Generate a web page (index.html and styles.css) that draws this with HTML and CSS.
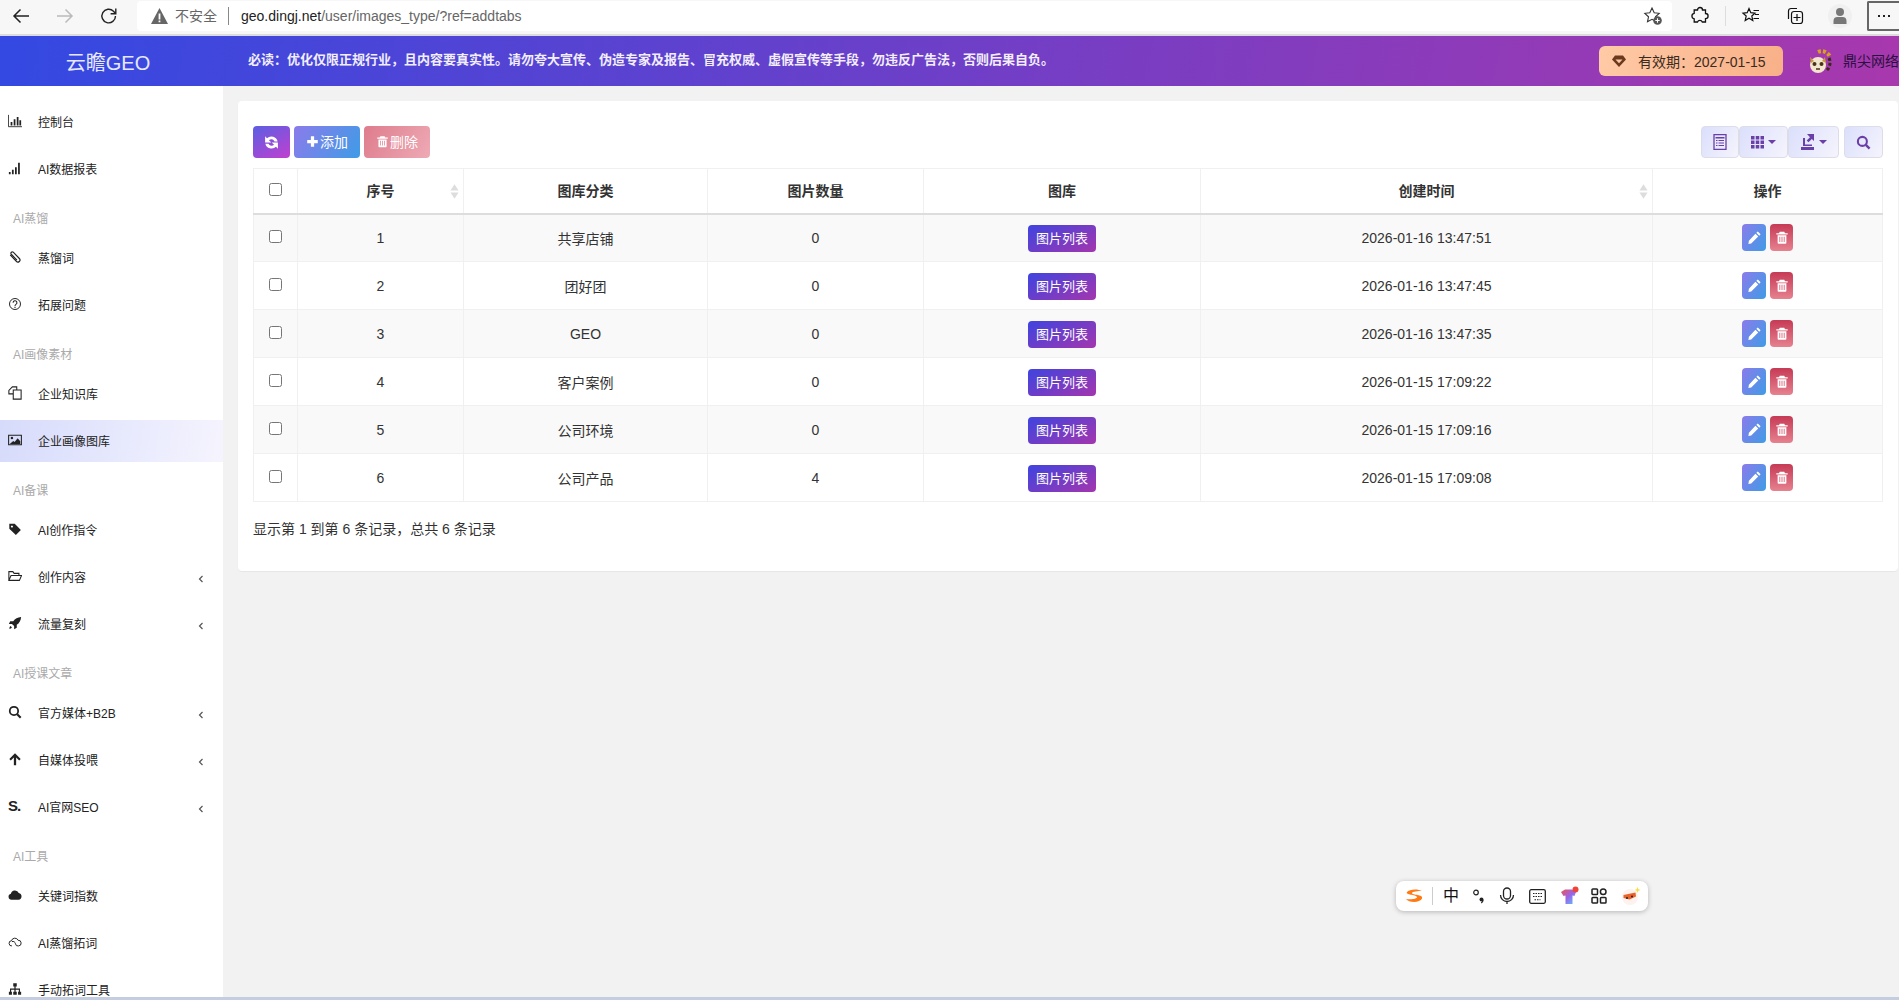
FILE: index.html
```html
<!DOCTYPE html>
<html lang="zh-CN">
<head>
  <meta charset="UTF-8">
  <title>企业画像图库</title>
  <link rel="stylesheet" href="styles.css">
</head>
<body>
  <svg class="sprite" width="0" height="0">
    <symbol id="i-refresh" viewBox="0 0 16 16"><path d="M14.500 6.800A6.800 6.800 0 0 0 3.200 3.400L1.200 1.400V8h6.600L5.300 5.500a3.700 3.700 0 0 1 5.900 1.300zM1.500 9.200a6.800 6.800 0 0 0 11.300 3.400l2 2V8H8.200l2.500 2.500a3.700 3.700 0 0 1-5.900-1.300z" fill="currentColor"/></symbol>
    <symbol id="i-plus" viewBox="0 0 16 16"><path d="M6 1.500h4V6h4.500v4H10v4.500H6V10H1.500V6H6z" fill="currentColor"/></symbol>
    <symbol id="i-trash" viewBox="0 0 16 16"><path fill-rule="evenodd" d="M5.500 1.500h5l1 1.500h3v1.500h-13V3h3zM3 5.500h10V14a1 1 0 0 1-1 1H4a1 1 0 0 1-1-1zm2 1.500v6h1V7zm2.500 0v6h1V7zm2.500 0v6h1V7z" fill="currentColor"/></symbol>
    <symbol id="i-pencil" viewBox="0 0 16 16"><path d="M11.500 1.500l3 3-1.500 1.500-3-3zM9 4l3 3-7.500 7.500L1.500 15l.5-3.500z" fill="currentColor"/></symbol>
    <symbol id="i-back" viewBox="0 0 20 20"><path d="M18 10H3M9.500 3.500L3 10l6.500 6.500" fill="none" stroke="currentColor" stroke-width="1.500"/></symbol>
    <symbol id="i-left" viewBox="0 0 6 8"><path d="M4.500 1L1.500 4l3 3" fill="none" stroke="currentColor" stroke-width="1.200"/></symbol>
    <symbol id="i-sort" viewBox="0 0 10 16"><path d="M5 0l4.500 7H.5zM5 16l4.500-7H.5z" fill="currentColor"/></symbol>
  </svg>

  <div class="browser-bar">
    <div class="nav-icons">
      <svg class="nav-icon" width="20" height="20"><use href="#i-back"/></svg>
      <svg class="nav-icon nav-off" width="20" height="20" viewBox="0 0 20 20"><use href="#i-back" transform="matrix(-1 0 0 1 20 0)"/></svg>
      <svg class="nav-icon" width="20" height="20" viewBox="0 0 20 20"><path d="M16.500 10a6.800 6.800 0 1 1-2-4.800L16.500 7.500M16.800 2.500v5.200h-5.200" fill="none" stroke="currentColor" stroke-width="1.400"/></svg>
    </div>
    <div class="address">
      <svg width="17" height="16" viewBox="0 0 17 16"><path fill-rule="evenodd" d="M8.500 0L17 16H0zM7.600 5.500v6h1.800v-6zm0 7v1.800h1.800v-1.800z" fill="#666"/></svg>
      <span class="not-safe">不安全</span>
      <span class="address-sep"></span>
      <span class="url"><b>geo.dingj.net</b>/user/images_type/?ref=addtabs</span>
      <svg class="star-add" width="20" height="20" viewBox="0 0 20 20"><path d="M9 2l2.200 4.700 5 .6-3.700 3.500 1 5L9 13.300 4.500 15.800l1-5L1.800 7.300l5-.6z" fill="none" stroke="#333" stroke-width="1.100"/><circle cx="14.500" cy="14.500" r="4.300" fill="#555"/><path d="M14.500 12.300v4.400M12.300 14.500h4.400" stroke="#fff" stroke-width="1.100"/></svg>
    </div>
    <div class="tools">
      <svg class="tool" width="20" height="20" viewBox="0 0 20 20"><path d="M7.500 4a2.500 2.500 0 0 1 5 0h3v3.500a2.600 2.600 0 0 1 0 5.200V16h-3.200a2.600 2.600 0 0 0-4.800 0H4.200v-3.200a2.800 2.800 0 0 1 0-5.500V4z" fill="none" stroke="#111" stroke-width="1.300"/></svg>
      <span class="tool-sep"></span>
      <svg class="tool" width="20" height="20" viewBox="0 0 20 20"><path d="M8 2.500l1.800 4.200 4.200.4-3.200 2.900 1 4.500L8 12.200 4.200 14.500l1-4.500L2 7.100l4.200-.4z" fill="none" stroke="#111" stroke-width="1.200"/><path d="M12.500 4.500H18M14 8.500h4M12.500 12.500H18" stroke="#111" stroke-width="1.200"/></svg>
      <svg class="tool tool-coll" width="20" height="20" viewBox="0 0 20 20"><path d="M3.500 13V5a2.500 2.500 0 0 1 2.500-2.500h6" fill="none" stroke="#111" stroke-width="1.200"/><rect x="6.500" y="5.500" width="11" height="12" rx="2.500" fill="none" stroke="#111" stroke-width="1.200"/><path d="M12 8v7M8.500 11.500h7" stroke="#111" stroke-width="1.200"/></svg>
      <span class="profile">
        <svg width="16" height="20" viewBox="0 0 16 20"><circle cx="8" cy="6" r="4" fill="#777"/><path d="M1.500 18v-3a4 4 0 0 1 4-4h5a4 4 0 0 1 4 4v3z" fill="#777"/></svg>
      </span>
      <span class="menu-box"><i></i><i></i><i></i></span>
    </div>
  </div>

  <header class="top">
    <div class="logo">云瞻GEO</div>
    <div class="notice">必读：优化仅限正规行业，且内容要真实性。请勿夸大宣传、伪造专家及报告、冒充权威、虚假宣传等手段，勿违反广告法，否则后果自负。</div>
    <div class="expire">
      <svg width="14" height="14" viewBox="0 0 14 14"><path fill-rule="evenodd" d="M3 1.500h8L14 5.500 7 13 0 5.500zM3.500 5.500L7 9.200l3.500-3.700z" fill="#6b3a1e"/></svg>
      <span>有效期：2027-01-15</span>
    </div>
    <svg class="avatar" width="26" height="28" viewBox="0 0 26 28">
      <path d="M11 5a9 9 0 0 1 12 5" fill="none" stroke="#d8a21c" stroke-width="4" stroke-dasharray="3 2"/>
      <path d="M22 11c2 4 1 9-2 12" fill="none" stroke="#3a2a10" stroke-width="3" stroke-dasharray="3 2"/>
      <circle cx="11" cy="18" r="8" fill="#f3e6cf"/>
      <path d="M3 10l4 4-3 2zM18 10l-3 4 4 2z" fill="#c99a3a"/>
      <circle cx="7.500" cy="17" r="2" fill="#4a3218"/><circle cx="14.500" cy="17" r="2" fill="#4a3218"/>
      <path d="M9 22h4" stroke="#4a3218" stroke-width="1.500"/>
    </svg>
    <div class="company">鼎尖网络</div>
  </header>

  <div class="main">
    <nav class="sidebar">
      <a class="item"><svg class="ico" viewBox="0 0 16 16"><path d="M.5 1v13.500H16" fill="none" stroke="currentColor"/><path d="M3 9h2v4H3zM6.500 6h2v7h-2zM10 3.500h2V13h-2zM13 7h2v6h-2z" fill="currentColor"/></svg>控制台</a>
      <a class="item"><svg class="ico" viewBox="0 0 16 16"><path d="M1 12.500h2V15H1zM4.500 10h2v5h-2zM8 7h2v8H8zM11.500 2h2v13h-2z" fill="currentColor"/></svg>AI数据报表</a>
      <div class="group">AI蒸馏</div>
      <a class="item"><svg class="ico" viewBox="0 0 16 16"><path d="M2.500 5.500l7 7.500a2.300 2.300 0 0 0 3.500-3.300L6 2.500A1.600 1.600 0 0 0 3.700 4.700l6.500 6.800" fill="none" stroke="currentColor" stroke-width="1.300"/></svg>蒸馏词</a>
      <a class="item"><svg class="ico" viewBox="0 0 16 16"><circle cx="8" cy="8" r="6.300" fill="none" stroke="currentColor" stroke-width="1.100"/><path d="M5.800 6.500a2.200 2.200 0 1 1 3.300 1.900c-.8.500-1.100.8-1.100 1.800M8 11v1.500" fill="none" stroke="currentColor" stroke-width="1.200"/></svg>拓展问题</a>
      <div class="group">AI画像素材</div>
      <a class="item"><svg class="ico" viewBox="0 0 16 16"><path d="M6 4.500h9V15H6zM6 9H1V5l4-4h5v3.500" fill="none" stroke="currentColor" stroke-width="1.200"/></svg>企业知识库</a>
      <a class="item active"><svg class="ico" viewBox="0 0 16 16"><path d="M.7 2.500h14.600v11H.7z" fill="none" stroke="currentColor" stroke-width="1.200"/><circle cx="4.500" cy="5.800" r="1.400" fill="currentColor"/><path d="M2 12.500l4-3.500 1.500 1.300L11 6l3 3.500v3z" fill="currentColor"/></svg>企业画像图库</a>
      <div class="group">AI备课</div>
      <a class="item"><svg class="ico" viewBox="0 0 16 16"><path fill-rule="evenodd" d="M1.500 2h6.200l7 7.200-5.700 5.600-7.500-7zM4.500 4a1.200 1.200 0 1 0 .01 0z" fill="currentColor"/></svg>AI创作指令</a>
      <a class="item"><svg class="ico" viewBox="0 0 16 16"><path d="M1 13V3h4.500l1.500 2h5.500v2.500M1 13l2.500-5.500H15.500L13 13z" fill="none" stroke="currentColor" stroke-width="1.200"/></svg>创作内容<svg class="arrow"><use href="#i-left"/></svg></a>
      <a class="item"><svg class="ico" viewBox="0 0 16 16"><path d="M15 1c-4 .3-7 2-9 5H2.500L1 9h3.500L7 11.500V15l3-1.500V10c3-2 4.700-5 5-9zM3 11.500c-1 .5-1.500 2-1.500 3 1 0 2.500-.5 3-1.500z" fill="currentColor"/></svg>流量复刻<svg class="arrow"><use href="#i-left"/></svg></a>
      <div class="group">AI授课文章</div>
      <a class="item"><svg class="ico" viewBox="0 0 16 16"><circle cx="6.800" cy="6.800" r="4.800" fill="none" stroke="currentColor" stroke-width="2"/><path d="M10.500 10.500l4 4" stroke="currentColor" stroke-width="2.400"/></svg>官方媒体+B2B<svg class="arrow"><use href="#i-left"/></svg></a>
      <a class="item"><svg class="ico" viewBox="0 0 16 16"><path d="M8 1.500L14.500 8l-1.700 1.700L9.300 6.300V15H6.700V6.300L3.200 9.700 1.500 8z" fill="currentColor"/></svg>自媒体投喂<svg class="arrow"><use href="#i-left"/></svg></a>
      <a class="item"><span class="ico ico-s">S.</span>AI官网SEO<svg class="arrow"><use href="#i-left"/></svg></a>
      <div class="group">AI工具</div>
      <a class="item"><svg class="ico" viewBox="0 0 16 16"><path d="M4 13.500a3.500 3.500 0 0 1-.7-6.900 4.700 4.700 0 0 1 9-.8 3.900 3.900 0 0 1-.3 7.700z" fill="currentColor"/></svg>关键词指数</a>
      <a class="item"><svg class="ico" viewBox="0 0 16 16"><path d="M4.500 12.500a3 3 0 0 1-.5-6 4 4 0 0 1 7.500-.5 3.200 3.200 0 0 1 .5 6.500 3 3 0 0 1-3.500-2.500A3 3 0 0 0 4.500 7.500" fill="none" stroke="currentColor" stroke-width="1.100"/></svg>AI蒸馏拓词</a>
      <a class="item"><svg class="ico" viewBox="0 0 16 16"><path d="M6 1.500h4V5H8.700v2.500h5V11H15v3.500h-3.500V11h.9V8.800H8.700V11H10v3.500H6V11h1.300V8.800H3.600V11h.9v3.500H1V11h1.300V7.500h5V5H6z" fill="currentColor"/></svg>手动拓词工具</a>
    </nav>

    <section class="content">
      <div class="card">
        <div class="toolbar">
          <button class="btn btn-refresh"><svg width="15" height="15"><use href="#i-refresh"/></svg></button>
          <button class="btn btn-add"><svg width="13" height="13"><use href="#i-plus"/></svg>添加</button>
          <button class="btn btn-del"><svg width="13" height="13"><use href="#i-trash"/></svg>删除</button>
          <div class="toolbar-right">
            <div class="btn-group">
              <button class="tbtn tbtn-list"><svg width="14" height="16" viewBox="0 0 14 16"><path d="M1 .7h12v14.600H1z" fill="none" stroke="currentColor" stroke-width="1.300"/><path d="M2.500 3h9v1.500h-9zM3 6h1.500v1H3zM5.500 6H11v1H5.500zM3 8.500h1.500v1H3zM5.500 8.500H11v1H5.500zM3 11h1.500v1H3zM5.500 11H11v1H5.500z" fill="currentColor"/></svg></button>
              <button class="tbtn tbtn-cols"><svg width="13" height="14" viewBox="0 0 13 14"><path d="M0 1h3.500v3.500H0zM4.750 1h3.500v3.500h-3.500zM9.500 1H13v3.500H9.500zM0 5.500h3.500V9H0zM4.750 5.500h3.500V9h-3.500zM9.500 5.500H13V9H9.500zM0 10h3.500v3.500H0zM4.750 10h3.500v3.500h-3.500zM9.500 10H13v3.500H9.500z" fill="currentColor"/></svg><span class="caret"></span></button>
              <button class="tbtn tbtn-export"><svg width="14" height="16" viewBox="0 0 14 16"><path d="M6 0h7v7l-2.200-2L7.500 8.300 5.700 6.500 9 3.200zM2 4h2v6.500h7V12H2zM0 13h13v3H0z" fill="currentColor"/></svg><span class="caret"></span></button>
            </div>
            <button class="tbtn tbtn-search"><svg width="15" height="15" viewBox="0 0 16 16"><circle cx="6.800" cy="6.800" r="4.800" fill="none" stroke="currentColor" stroke-width="2.200"/><path d="M10.500 10.500l4 4" stroke="currentColor" stroke-width="2.600"/></svg></button>
          </div>
        </div>

        <table class="grid">
          <colgroup>
            <col class="c-check"><col class="c-no"><col class="c-type"><col class="c-count"><col class="c-lib"><col class="c-time"><col>
          </colgroup>
          <thead>
            <tr>
              <th><input type="checkbox"></th>
              <th class="sortable"><span class="th-text">序号</span><svg class="sort"><use href="#i-sort"/></svg></th>
              <th><span class="th-text">图库分类</span></th>
              <th><span class="th-text">图片数量</span></th>
              <th><span class="th-text">图库</span></th>
              <th class="sortable"><span class="th-text">创建时间</span><svg class="sort"><use href="#i-sort"/></svg></th>
              <th><span class="th-text">操作</span></th>
            </tr>
          </thead>
          <tbody>
            <tr>
              <td><input type="checkbox"></td><td>1</td><td>共享店铺</td><td>0</td>
              <td><a class="list-btn">图片列表</a></td><td>2026-01-16 13:47:51</td>
              <td class="ops"><a class="op op-edit"><svg width="15" height="15"><use href="#i-pencil"/></svg></a><a class="op op-del"><svg width="14" height="15"><use href="#i-trash"/></svg></a></td>
            </tr>
            <tr>
              <td><input type="checkbox"></td><td>2</td><td>团好团</td><td>0</td>
              <td><a class="list-btn">图片列表</a></td><td>2026-01-16 13:47:45</td>
              <td class="ops"><a class="op op-edit"><svg width="15" height="15"><use href="#i-pencil"/></svg></a><a class="op op-del"><svg width="14" height="15"><use href="#i-trash"/></svg></a></td>
            </tr>
            <tr>
              <td><input type="checkbox"></td><td>3</td><td>GEO</td><td>0</td>
              <td><a class="list-btn">图片列表</a></td><td>2026-01-16 13:47:35</td>
              <td class="ops"><a class="op op-edit"><svg width="15" height="15"><use href="#i-pencil"/></svg></a><a class="op op-del"><svg width="14" height="15"><use href="#i-trash"/></svg></a></td>
            </tr>
            <tr>
              <td><input type="checkbox"></td><td>4</td><td>客户案例</td><td>0</td>
              <td><a class="list-btn">图片列表</a></td><td>2026-01-15 17:09:22</td>
              <td class="ops"><a class="op op-edit"><svg width="15" height="15"><use href="#i-pencil"/></svg></a><a class="op op-del"><svg width="14" height="15"><use href="#i-trash"/></svg></a></td>
            </tr>
            <tr>
              <td><input type="checkbox"></td><td>5</td><td>公司环境</td><td>0</td>
              <td><a class="list-btn">图片列表</a></td><td>2026-01-15 17:09:16</td>
              <td class="ops"><a class="op op-edit"><svg width="15" height="15"><use href="#i-pencil"/></svg></a><a class="op op-del"><svg width="14" height="15"><use href="#i-trash"/></svg></a></td>
            </tr>
            <tr>
              <td><input type="checkbox"></td><td>6</td><td>公司产品</td><td>4</td>
              <td><a class="list-btn">图片列表</a></td><td>2026-01-15 17:09:08</td>
              <td class="ops"><a class="op op-edit"><svg width="15" height="15"><use href="#i-pencil"/></svg></a><a class="op op-del"><svg width="14" height="15"><use href="#i-trash"/></svg></a></td>
            </tr>
          </tbody>
        </table>

        <div class="pager">显示第 1 到第 6 条记录，总共 6 条记录</div>
      </div>
    </section>
  </div>

  <div class="taskbar-edge"></div>

  <!-- input method bar floating over the page -->
  <div class="ime">
    <svg width="20" height="16" viewBox="0 0 20 16"><path d="M18 3C14 .5 5 1 3 4c-2 3 9 2.500 10 5 .5 1.500-5 3-11 2 3 4 14 4 16-.5C19.500 6 8 7.500 8 5c0-1.500 6-2 10-2z" fill="#ff7a12"/></svg>
    <span class="ime-sep"></span>
    <span class="ime-zh">中</span>
    <svg width="12" height="16" viewBox="0 0 12 16"><circle cx="3" cy="4.500" r="2.300" fill="none" stroke="#222" stroke-width="1.200"/><circle cx="8.500" cy="11.500" r="2" fill="#222"/><path d="M10 12c0 1.500-.6 2.500-1.800 3" stroke="#222" stroke-width="1.200" fill="none"/></svg>
    <svg width="16" height="18" viewBox="0 0 16 18"><rect x="4.500" y="1" width="7" height="11" rx="3.500" fill="none" stroke="#222" stroke-width="1.300"/><path d="M1.500 8a6.500 6.500 0 0 0 13 0M8 14.500V17" fill="none" stroke="#222" stroke-width="1.300"/></svg>
    <svg width="17" height="15" viewBox="0 0 17 15"><rect x=".7" y=".7" width="15.600" height="13.600" rx="1.500" fill="none" stroke="#222" stroke-width="1.300"/><path d="M4 4.500h9M4 7.500h9M5.500 10.800h6" stroke="#222" stroke-width="1.100" stroke-dasharray="1.500 1"/></svg>
    <svg class="ime-shirt" width="20" height="20" viewBox="0 0 20 20"><defs><linearGradient id="shirt" x1="0" y1="0" x2="1" y2="1"><stop offset="0" stop-color="#f0524a"/><stop offset=".5" stop-color="#9b63e8"/><stop offset="1" stop-color="#58c8ff"/></linearGradient></defs><path d="M1 6l4-2.500h7L16 6l-1.500 4-2-.5V18h-7V9.500l-2 .5z" fill="url(#shirt)"/><circle cx="15.500" cy="3.500" r="3" fill="#f0443a"/></svg>
    <svg width="16" height="16" viewBox="0 0 16 16"><g fill="none" stroke="#222" stroke-width="1.500"><rect x="1" y="1" width="5.500" height="5.500" rx=".8"/><circle cx="12.200" cy="3.800" r="2.800"/><rect x="1" y="9.500" width="5.500" height="5.500" rx=".8"/><rect x="9.500" y="9.500" width="5.500" height="5.500" rx=".8"/></g></svg>
    <svg width="20" height="20" viewBox="0 0 20 20"><circle cx="9" cy="11" r="8" fill="#fdf2ee"/><path d="M2.500 9l12-2.500.5 4-6.500 3-6-1.500z" fill="#e8622a"/><circle cx="6" cy="12" r="1" fill="#222"/><circle cx="11" cy="10.500" r="1" fill="#222"/><path d="M16.500 1l.8 2.200 2.200.8-2.200.8-.8 2.200-.8-2.200-2.200-.8 2.200-.8z" fill="#ffd93b"/></svg>
  </div>
</body>
</html>
```

FILE: styles.css
```css
* {
  box-sizing: border-box;
}

html, body {
  height: 100%;
}

body {
  margin: 0;
  display: flex;
  flex-direction: column;
  overflow: hidden;
  font-family: "Liberation Sans", "Noto Sans CJK SC", sans-serif;
  font-size: 14px;
  color: #333;
  background-color: #f2f2f2;
}

.sprite {
  position: absolute;
}

/* browser chrome */
.browser-bar {
  flex: none;
  display: flex;
  align-items: flex-start;
  height: 36px;
  padding-top: 1px;
  background-color: #f7f7f7;
  border-bottom: 2px solid #dcdcdc;
}

.nav-icons {
  flex: none;
  display: flex;
  align-items: center;
  gap: 24px;
  width: 137px;
  height: 30px;
  padding-left: 11px;
}

.nav-icon {
  color: #222;
}

.nav-off {
  color: #bbb;
}

.address {
  flex: none;
  display: flex;
  align-items: center;
  width: 1535px;
  height: 30px;
  padding: 0 9px 0 14px;
  background-color: #fff;
  border-radius: 4px;
}

.not-safe {
  margin-left: 7px;
  padding-bottom: 2px;
  color: #666;
}

.address-sep {
  width: 1px;
  height: 18px;
  margin: 0 12px 0 11px;
  background-color: #888;
}

.url {
  color: #666;
}

.url b {
  font-weight: normal;
  color: #222;
}

.star-add {
  margin-left: auto;
}

.tools {
  flex: 1;
  display: flex;
  align-items: center;
  height: 30px;
  padding-left: 18px;
}

.tool-sep {
  width: 1px;
  height: 20px;
  margin: 0 15px;
  background-color: #ddd;
}

.tool + .tool-coll {
  margin-left: 24px;
}

.profile {
  display: flex;
  align-items: center;
  justify-content: center;
  width: 24px;
  height: 24px;
  margin-left: 23px;
  border-radius: 50%;
  background-color: #f0f0f0;
}

.menu-box {
  display: flex;
  align-items: center;
  justify-content: center;
  gap: 3px;
  width: 32px;
  height: 30px;
  margin-left: 15px;
  border: 2px solid #666;
  border-right: none;
  border-radius: 2px 0 0 2px;
}

.menu-box i {
  width: 2px;
  height: 2px;
  background-color: #222;
}

/* purple header */
.top {
  flex: none;
  display: flex;
  align-items: center;
  height: 50px;
  overflow: hidden;
  color: #fff;
  background: linear-gradient(100deg, #3349e2 0%, #7a3dc2 60%, #a838ad 100%);
}

.logo {
  width: 223px;
  padding-right: 7px;
  text-align: center;
  font-size: 20px;
  color: #e6e8ff;
}

.notice {
  width: 1376px;
  padding: 0 0 5px 25px;
  font-size: 13px;
  font-weight: bold;
  color: #f2eefc;
}

.expire {
  display: flex;
  align-items: center;
  gap: 12px;
  width: 184px;
  height: 30px;
  padding: 0 0 1px 13px;
  border-radius: 6px;
  color: #3a2a20;
  background: linear-gradient(100deg, #ffcaa6, #f8b088);
}

.avatar {
  margin-left: 24px;
}

.company {
  margin-left: 10px;
  padding-bottom: 2px;
  white-space: nowrap;
  color: #2a1040;
}

/* layout */
.main {
  flex: 1;
  min-height: 0;
  display: flex;
}

.sidebar {
  flex: none;
  width: 223px;
  padding-top: 15px;
  overflow: hidden;
  background-color: #fff;
  font-size: 12px;
}

.item {
  position: relative;
  display: flex;
  align-items: center;
  height: 42px;
  margin-bottom: 5px;
  padding: 0 0 2px 8px;
  color: #222;
}

.item.active {
  background: linear-gradient(100deg, #d6dbfb, #f5f4fe);
}

.ico {
  flex: none;
  width: 14px;
  height: 14px;
  margin-right: 16px;
  color: #222;
}

.ico-s {
  font-size: 15px;
  font-weight: bold;
  line-height: 14px;
  letter-spacing: -1px;
}

.arrow {
  position: absolute;
  left: 198px;
  top: 19px;
  width: 6px;
  height: 8px;
  color: #555;
}

.group {
  height: 42px;
  padding: 14px 0 0 13px;
  line-height: 20px;
  color: #aaa;
}

.content {
  flex: 1;
  min-width: 0;
  padding: 15px 1px 0 15px;
}

.card {
  padding: 25px 15px 32px;
  background-color: #fff;
  border-radius: 4px;
  box-shadow: 0 1px 1px rgba(0, 0, 0, 0.05);
}

/* toolbar */
.toolbar {
  display: flex;
  gap: 4px;
  height: 32px;
  margin-bottom: 10px;
}

.btn {
  display: flex;
  align-items: center;
  justify-content: center;
  gap: 1px;
  height: 32px;
  padding: 0 0 2px;
  font-family: inherit;
  font-size: 14px;
  color: #fff;
  border: none;
  border-radius: 4px;
}

.btn-refresh {
  width: 37px;
  padding-bottom: 0;
  background: linear-gradient(150deg, #5a5fe2, #c23fd0);
}

.btn-add {
  width: 66px;
  background: linear-gradient(120deg, #8b7bea, #3f9ce6);
}

.btn-del {
  width: 66px;
  background: linear-gradient(120deg, #de7c8c, #eeaab5);
}

.toolbar-right {
  display: flex;
  gap: 5px;
  margin-left: auto;
}

.btn-group {
  display: flex;
}

.tbtn {
  display: flex;
  align-items: center;
  justify-content: center;
  gap: 4px;
  height: 32px;
  padding: 0;
  color: #6a3fa8;
  border: 1px solid #dcdde8;
  border-radius: 4px;
  background: linear-gradient(120deg, #dbdffb, #f5f4fd);
}

.tbtn-list {
  width: 38px;
}

.tbtn-cols {
  width: 49px;
}

.tbtn-export {
  width: 51px;
}

.tbtn-search {
  width: 39px;
}

.caret {
  width: 0;
  height: 0;
  border-top: 4px solid currentColor;
  border-left: 4px solid transparent;
  border-right: 4px solid transparent;
}

/* table */
.grid {
  width: 100%;
  table-layout: fixed;
  border-collapse: collapse;
  text-align: center;
}

.c-check {
  width: 44px;
}

.c-no {
  width: 166px;
}

.c-type {
  width: 244px;
}

.c-count {
  width: 216px;
}

.c-lib {
  width: 277px;
}

.c-time {
  width: 452px;
}

.grid th,
.grid td {
  padding: 0;
  border: 1px solid #f0f0f0;
}

.grid th {
  position: relative;
  height: 45px;
  font-weight: bold;
  color: #333;
  border-bottom: 2px solid #ddd;
}

.th-text {
  position: relative;
  top: -1px;
}

.grid td {
  height: 48px;
}

.grid tbody tr:nth-child(odd) {
  background-color: #f9f9f9;
}

.grid input {
  display: block;
  margin: -3px auto 0;
}

.sort {
  position: absolute;
  right: 4px;
  top: 15px;
  width: 9px;
  height: 15px;
  color: #ddd;
}

.list-btn {
  display: inline-block;
  width: 68px;
  height: 27px;
  margin-top: 1px;
  font-size: 13px;
  line-height: 27px;
  vertical-align: middle;
  color: #fff;
  border-radius: 4px;
  background: linear-gradient(150deg, #3e44e0, #a436ae);
}

.op {
  display: inline-flex;
  align-items: center;
  justify-content: center;
  width: 24px;
  height: 27px;
  margin: 0 2px;
  vertical-align: middle;
  color: #fff;
  border-radius: 4px;
}

.op-edit {
  background: linear-gradient(120deg, #8b7bea, #3f9ce6);
}

.op-del {
  width: 23px;
  background: linear-gradient(180deg, #c63a55, #e6828f);
}

.pager {
  margin-top: 17px;
  line-height: 20px;
}

.taskbar-edge {
  flex: none;
  height: 3px;
  background-color: #c5cde0;
}

/* floating input method bar */
.ime {
  position: absolute;
  left: 1396px;
  top: 881px;
  display: flex;
  align-items: center;
  gap: 14px;
  width: 252px;
  height: 30px;
  padding-left: 8px;
  background-color: #fff;
  border-radius: 8px;
  box-shadow: 0 1px 5px rgba(0, 0, 0, 0.25);
}

.ime-sep {
  width: 1px;
  height: 18px;
  margin: 0 -4px 0 -6px;
  background-color: #ccc;
}

.ime-shirt {
  margin-right: -3px;
}

.ime-zh {
  font-size: 16px;
  line-height: 20px;
  color: #111;
}
```
